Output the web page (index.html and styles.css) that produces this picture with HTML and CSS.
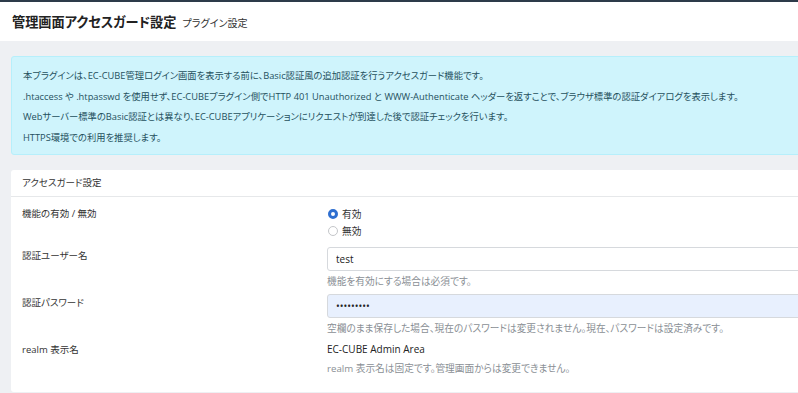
FILE: index.html
```html
<!DOCTYPE html>
<html lang="ja">

<head>
    <meta charset="UTF-8">
    <meta name="viewport" content="width=device-width, initial-scale=1.0">
    <title>管理画面アクセスガード設定</title>
    <link rel="stylesheet" href="styles.css">
</head>

<body>
    <div class="topbar"></div>

    <div class="pageHead">
        <h1 class="pageTitle">管理画面アクセスガード設定</h1>
        <span class="pageSub">プラグイン設定</span>
    </div>

    <div class="content">
        <div class="alertInfo">
            <p>本プラグインは、EC-CUBE管理ログイン画面を表示する前に、Basic認証風の追加認証を行うアクセスガード機能です。</p>
            <p>.htaccess や .htpasswd を使用せず、EC-CUBEプラグイン側でHTTP 401 Unauthorized と WWW-Authenticate ヘッダーを返すことで、ブラウザ標準の認証ダイアログを表示します。</p>
            <p>Webサーバー標準のBasic認証とは異なり、EC-CUBEアプリケーションにリクエストが到達した後で認証チェックを行います。</p>
            <p>HTTPS環境での利用を推奨します。</p>
        </div>

        <div class="card">
            <div class="cardHead">アクセスガード設定</div>
            <div class="cardBody">
                <div class="formRow first">
                    <div class="label">機能の有効 / 無効</div>
                    <div class="field">
                        <label class="radio"><input type="radio" name="enabled" checked> 有効</label>
                        <label class="radio"><input type="radio" name="enabled"> 無効</label>
                    </div>
                </div>
                <div class="formRow">
                    <div class="label">認証ユーザー名</div>
                    <div class="field">
                        <input class="textInput" type="text" value="test">
                        <div class="help">機能を有効にする場合は必須です。</div>
                    </div>
                </div>
                <div class="formRow">
                    <div class="label">認証パスワード</div>
                    <div class="field">
                        <input class="textInput filled" type="password" value="password1">
                        <div class="help">空欄のまま保存した場合、現在のパスワードは変更されません。現在、パスワードは設定済みです。</div>
                    </div>
                </div>
                <div class="formRow last">
                    <div class="label">realm 表示名</div>
                    <div class="field">
                        <div class="plain">EC-CUBE Admin Area</div>
                        <div class="help">realm 表示名は固定です。管理画面からは変更できません。</div>
                    </div>
                </div>
            </div>
        </div>
    </div>
</body>

</html>
```

FILE: styles.css
```css
body {
    margin: 0;
    background-color: #eef0f3;
    font-family: "Open Sans", "Noto Sans CJK JP", sans-serif;
    font-feature-settings: "palt";
    color: #333;
    font-size: 9.7px;
    overflow: hidden;
}

.topbar {
    height: 2px;
    background-color: #2d3b4a;
}

.pageHead {
    background-color: #fff;
    height: 39px;
    display: flex;
    align-items: center;
    padding-left: 12px;
    gap: 6px;
}

.pageTitle {
    margin: 0;
    font-size: 13.2px;
    font-weight: bold;
    color: #222;
}

.pageSub {
    font-size: 10.1px;
    color: #333;
    padding-top: 2px;
}

.content {
    padding: 15px 0 0 11px;
    width: 1100px;
}

.alertInfo {
    background-color: #cff4fc;
    border: 1px solid #b6effb;
    border-radius: 3px;
    color: #24505c;
    font-size: 9.3px;
    padding: 9px 11px 6px;
}

.alertInfo p {
    margin: 0;
    line-height: 20.6px;
}

.card {
    margin-top: 15px;
    background-color: #fff;
    border-radius: 3px;
}

.cardHead {
    height: 26px;
    line-height: 26px;
    padding-left: 11px;
    border-bottom: 1px solid #e6e8ea;
    font-size: 9.5px;
    color: #333;
}

.cardBody {
    padding: 8px 11px 15px;
}

.formRow {
    display: grid;
    grid-template-columns: 305px 1fr;
    margin-bottom: 4px;
}

.formRow.first {
    margin-bottom: 8px;
}

.formRow.last {
    margin-bottom: 0;
}

.label {
    line-height: 17px;
    color: #333;
    font-size: 9.5px;
}

.field {
    display: flex;
    flex-direction: column;
}

.radio {
    display: flex;
    align-items: center;
    gap: 4px;
    height: 17px;
    color: #333;
}

.radio input {
    appearance: none;
    -webkit-appearance: none;
    width: 10px;
    height: 10px;
    margin: 0 0 0 1px;
    border: 1px solid #c4c6c9;
    border-radius: 50%;
    background: #fff;
}

.radio input:checked {
    border: 3px solid #2f6fd0;
    width: 10px;
    height: 10px;
    box-sizing: border-box;
}

.textInput {
    height: 24px;
    box-sizing: border-box;
    border: 1px solid #d6d9dd;
    border-radius: 3px;
    padding: 0 8px;
    font-family: "Open Sans", "Noto Sans CJK JP", sans-serif;
    font-size: 10px;
    color: #222;
    margin: 0;
}

.textInput.filled {
    background-color: #e8f0fe;
}

.help {
    color: #8a8f95;
    line-height: 17px;
    padding-top: 2px;
}

.plain {
    line-height: 17px;
    color: #222;
    font-size: 10px;
}
```
